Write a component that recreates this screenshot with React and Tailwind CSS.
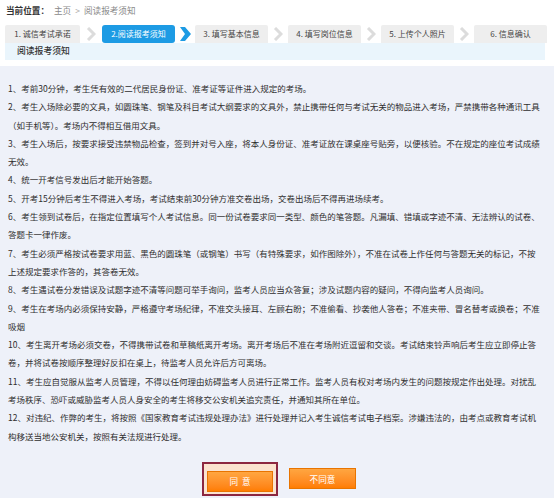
import React from "react";

const lines = [
  "1、考前30分钟，考生凭有效的二代居民身份证、准考证等证件进入规定的考场。",
  "2、考生入场除必要的文具，如圆珠笔、钢笔及科目考试大纲要求的文具外，禁止携带任何与考试无关的物品进入考场，严禁携带各种通讯工具",
  "（如手机等）。考场内不得相互借用文具。",
  "3、考生入场后，按要求接受违禁物品检查，签到并对号入座，将本人身份证、准考证放在课桌座号贴旁，以便核验。不在规定的座位考试成绩",
  "无效。",
  "4、统一开考信号发出后才能开始答题。",
  "5、开考15分钟后考生不得进入考场，考试结束前30分钟方准交卷出场，交卷出场后不得再进场续考。",
  "6、考生领到试卷后，在指定位置填写个人考试信息。同一份试卷要求同一类型、颜色的笔答题。凡漏填、错填或字迹不清、无法辨认的试卷、",
  "答题卡一律作废。",
  "7、考生必须严格按试卷要求用蓝、黑色的圆珠笔（或钢笔）书写（有特殊要求，如作图除外），不准在试卷上作任何与答题无关的标记，不按",
  "上述规定要求作答的，其答卷无效。",
  "8、考生遇试卷分发错误及试题字迹不清等问题可举手询问，监考人员应当众答复；涉及试题内容的疑问，不得向监考人员询问。",
  "9、考生在考场内必须保持安静，严格遵守考场纪律，不准交头接耳、左顾右盼；不准偷看、抄袭他人答卷；不准夹带、冒名替考或换卷；不准",
  "吸烟",
  "10、考生离开考场必须交卷，不得携带试卷和草稿纸离开考场。离开考场后不准在考场附近逗留和交谈。考试结束铃声响后考生应立即停止答",
  "卷，并将试卷按顺序整理好反扣在桌上，待监考人员允许后方可离场。",
  "11、考生应自觉服从监考人员管理，不得以任何理由妨碍监考人员进行正常工作。监考人员有权对考场内发生的问题按规定作出处理。对扰乱",
  "考场秩序、恐吓或威胁监考人员人身安全的考生将移交公安机关追究责任，并通知其所在单位。",
  "12、对违纪、作弊的考生，将按照《国家教育考试违规处理办法》进行处理并记入考生诚信考试电子档案。涉嫌违法的，由考点或教育考试机",
  "构移送当地公安机关，按照有关法规进行处理。",
];

const steps = [
  "1. 诚信考试承诺",
  "2.阅读报考须知",
  "3. 填写基本信息",
  "4. 填写岗位信息",
  "5. 上传个人照片",
  "6. 信息确认",
];

function GrayArrow() {
  return (
    <svg width="10" height="14" viewBox="0 0 10 14">
      <polyline points="2,1 8,7 2,13" fill="none" stroke="#dcdcdc" strokeWidth="3" />
    </svg>
  );
}

function BlueArrow() {
  return (
    <svg width="12" height="14" viewBox="0 0 12 14">
      <polygon points="1,0 6,0 12,7 6,14 1,14 6,7" fill="#1d9be4" />
    </svg>
  );
}

export default function App() {
  return (
    <div
      className="w-[554px] h-[498px] bg-white overflow-hidden flex flex-col"
      style={{ fontFamily: '"Noto Sans CJK SC", "Noto Sans", sans-serif' }}
    >
      {/* breadcrumb */}
      <div className="h-[20px] pl-[6px] flex items-center text-[8.6px] leading-none">
        <span className="text-[#333] font-semibold">当前位置：</span>
        <span className="text-[#8a8a8a] ml-[5px]">主页</span>
        <span className="text-[#aaa] mx-[4px]">&gt;</span>
        <span className="text-[#8a8a8a]">阅读报考须知</span>
      </div>

      {/* steps */}
      <div className="mt-[5px] pl-[5px] flex items-center h-[18px]">
        {steps.map((s, i) => (
          <React.Fragment key={i}>
            <div
              className={
                (i === 0 ? "w-[75px] " : "w-[73px] ") +
                (i === 1
                  ? "bg-[#1d9be4] text-white rounded-[3px] "
                  : "bg-[#eeeeee] text-[#444] rounded-t-[2px] ") +
                "h-[18px] flex items-center justify-center text-[8px] leading-none"
              }
            >
              {s}
            </div>
            {i < 5 && (
              <div className={(i === 0 ? "w-[22px]" : "w-[20px]") + " flex items-center justify-center"}>
                {i === 1 ? <BlueArrow /> : <GrayArrow />}
              </div>
            )}
          </React.Fragment>
        ))}
      </div>

      {/* heading band */}
      <div className="mx-[5px] w-[540px] h-[17px] bg-[#eaf5fc] flex items-center pl-[12px]">
        <span className="text-[8.8px] leading-none text-[#333] font-medium">阅读报考须知</span>
      </div>

      {/* content */}
      <div className="mt-[6px] flex-1 bg-[#eef1f9] pt-[13px] pl-[8px]">
        <div className="text-[8.5px] leading-[18.3px] text-[#2e2e2e]">
          {lines.map((l, i) => (
            <div key={i} className="whitespace-nowrap">
              {l}
            </div>
          ))}
        </div>

        <div className="mt-[17px] flex items-center justify-center gap-[11px] pr-[4px]">
          <div className="border-2 border-[#8c2740] bg-[#fbe3cf] px-[3px] py-[2px]">
            <button className="w-[66px] h-[21px] bg-gradient-to-b from-[#ffa640] to-[#ff7d00] border border-[#e87400] text-white text-[8.6px] leading-none">
              同&nbsp;&nbsp;意
            </button>
          </div>
          <button className="w-[67px] h-[21px] bg-gradient-to-b from-[#ffa640] to-[#ff7d00] border border-[#e87400] text-white text-[8.6px] leading-none">
            不同意
          </button>
        </div>
      </div>
    </div>
  );
}
